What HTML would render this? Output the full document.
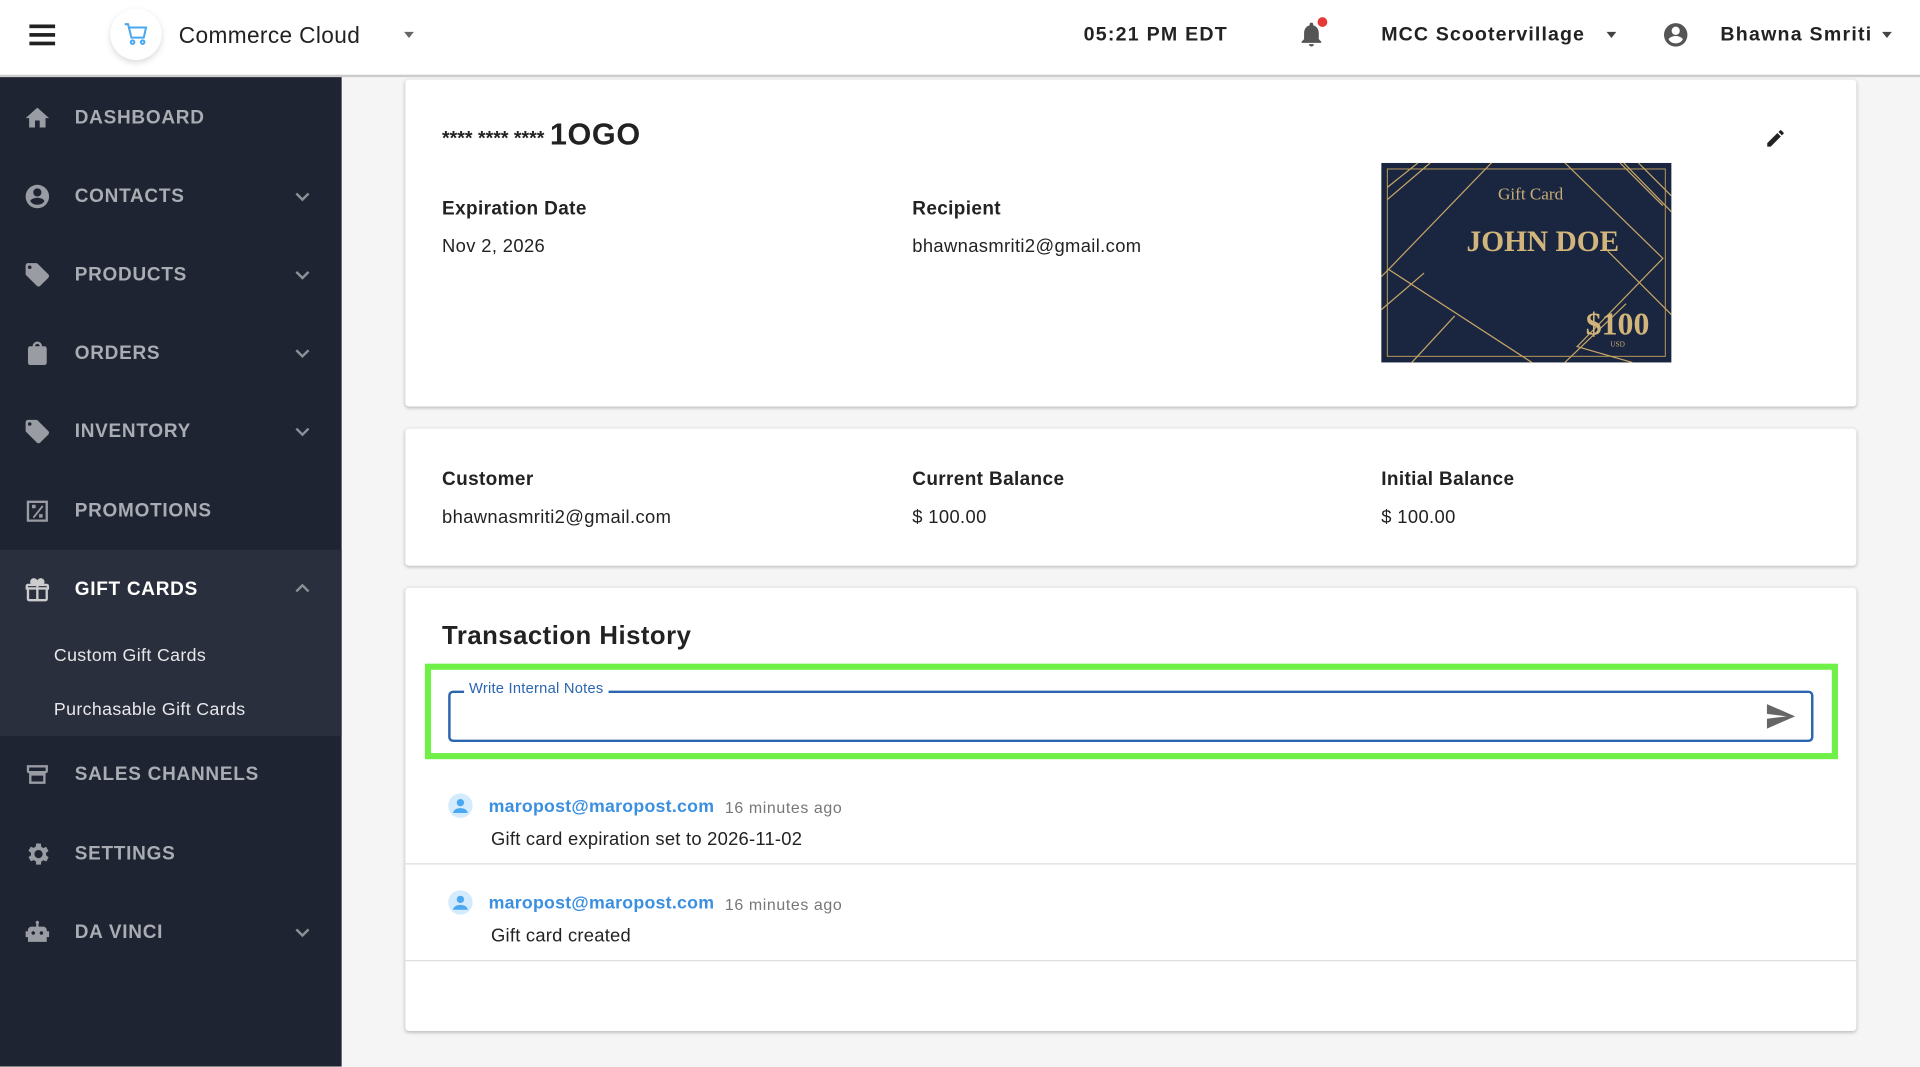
<!DOCTYPE html>
<html><head><meta charset="utf-8"><style>
*{box-sizing:border-box;margin:0;padding:0}
html,body{width:1920px;height:1067px;overflow:hidden;background:#f5f5f5}
#s{width:1568px;height:871px;transform:scale(1.22449);transform-origin:0 0;position:relative;font-family:"Liberation Sans",sans-serif;color:#222}
.hdr{position:absolute;left:0;top:0;width:1568px;height:63px;background:#fff;border-bottom:2px solid #ccc}
.side{position:absolute;left:0;top:63px;width:279px;height:808px;background:#1f2432}
.it{position:absolute;left:0;width:279px;height:50px;display:flex;align-items:center;color:#a9acb3;font-weight:bold;font-size:15.5px;letter-spacing:.6px}
.it svg{position:absolute;left:19px;width:23px;height:23px;fill:#9a9ca3}
.it span{position:absolute;left:61px;top:17px}
.it .ch{position:absolute;left:240px;width:14px;height:14px;fill:none;stroke:#8d9097;stroke-width:2}
.card{position:absolute;left:331px;width:1185px;background:#fff;box-shadow:0 1px 3px rgba(0,0,0,.25);border-radius:3px}
.lbl{position:absolute;font-size:15.5px;font-weight:bold;color:#222;letter-spacing:.3px}
.val{position:absolute;font-size:15px;color:#222;letter-spacing:.3px}
</style></head><body><div id="s">
<div class="hdr">
 <div style="position:absolute;left:24px;top:20px;width:21px;height:3px;background:#222;box-shadow:0 7px 0 #222,0 14px 0 #222"></div>
 <div style="position:absolute;left:90px;top:7px;width:42px;height:42px;border-radius:50%;background:#fff;box-shadow:0 2px 5px rgba(0,0,0,.15)"></div>
 <svg style="position:absolute;left:100px;top:17px" width="22" height="22" viewBox="0 0 24 24" fill="none" stroke="#4aa8f0" stroke-width="1.8"><path d="M2 3h3l3 12h11l2-9H6"/><circle cx="9" cy="19" r="1.6"/><circle cx="18" cy="19" r="1.6"/></svg>
 <div style="position:absolute;left:146px;top:18px;font-size:18.5px;color:#222;letter-spacing:.3px">Commerce Cloud</div>
 <div style="position:absolute;left:330px;top:26px;border:4px solid transparent;border-top:5px solid #666"></div>
 <div style="position:absolute;left:885px;top:20px;font-size:16px;font-weight:bold;letter-spacing:1px;color:#222">05:21 PM EDT</div>
 <svg style="position:absolute;left:1059px;top:16px" width="24" height="24" viewBox="0 0 24 24" fill="#555"><path d="M12 22a2 2 0 0 0 2-2h-4a2 2 0 0 0 2 2zm6-6V11c0-3-1.6-5.6-4.5-6.3V4a1.5 1.5 0 0 0-3 0v.7C7.6 5.4 6 8 6 11v5l-2 2v1h16v-1z"/></svg>
 <div style="position:absolute;left:1076px;top:14px;width:8px;height:8px;border-radius:50%;background:#e53935"></div>
 <div style="position:absolute;left:1128px;top:20px;font-size:16px;font-weight:bold;letter-spacing:.9px">MCC Scootervillage</div>
 <div style="position:absolute;left:1312px;top:26px;border:4px solid transparent;border-top:5px solid #444"></div>
 <svg style="position:absolute;left:1357px;top:17px" width="23" height="23" viewBox="0 0 24 24" fill="#555"><path d="M12 2a10 10 0 1 0 0 20 10 10 0 0 0 0-20zm0 3a3.5 3.5 0 1 1 0 7 3.5 3.5 0 0 1 0-7zm0 14.2a7.2 7.2 0 0 1-6-3.2c0-2 4-3.1 6-3.1s6 1.1 6 3.1a7.2 7.2 0 0 1-6 3.2z"/></svg>
 <div style="position:absolute;left:1405px;top:20px;font-size:16px;font-weight:bold;letter-spacing:1px">Bhawna Smriti</div>
 <div style="position:absolute;left:1537px;top:26px;border:4px solid transparent;border-top:5px solid #444"></div>
</div>
<div class="side">
 <div style="position:absolute;top:386px;left:0;width:279px;height:152px;background:#2a2f3d"></div>
 <div class="it" style="top:8px"><svg viewBox="0 0 24 24"><path d="M10 20v-6h4v6h5v-8h3L12 3 2 12h3v8z"/></svg><span>DASHBOARD</span></div>
 <div class="it" style="top:72px"><svg viewBox="0 0 24 24"><path d="M12 2a10 10 0 1 0 0 20 10 10 0 0 0 0-20zm0 3a3.5 3.5 0 1 1 0 7 3.5 3.5 0 0 1 0-7zm0 14a7 7 0 0 1-6-3c0-2 4-3 6-3s6 1 6 3a7 7 0 0 1-6 3z"/></svg><span>CONTACTS</span><svg class="ch" viewBox="0 0 14 14"><path d="M2 5l5 5 5-5"/></svg></div>
 <div class="it" style="top:136px"><svg viewBox="0 0 24 24"><path d="M21.4 11.6l-9-9A2 2 0 0 0 11 2H4a2 2 0 0 0-2 2v7c0 .6.2 1.1.6 1.4l9 9a2 2 0 0 0 2.8 0l7-7a2 2 0 0 0 0-2.8zM5.5 7A1.5 1.5 0 1 1 5.5 4a1.5 1.5 0 0 1 0 3z"/></svg><span>PRODUCTS</span><svg class="ch" viewBox="0 0 14 14"><path d="M2 5l5 5 5-5"/></svg></div>
 <div class="it" style="top:200px"><svg viewBox="0 0 24 24"><path d="M18 6h-2a4 4 0 0 0-8 0H6a2 2 0 0 0-2 2v12a2 2 0 0 0 2 2h12a2 2 0 0 0 2-2V8a2 2 0 0 0-2-2zm-6-2a2 2 0 0 1 2 2h-4a2 2 0 0 1 2-2z"/></svg><span>ORDERS</span><svg class="ch" viewBox="0 0 14 14"><path d="M2 5l5 5 5-5"/></svg></div>
 <div class="it" style="top:264px"><svg viewBox="0 0 24 24"><path d="M21.4 11.6l-9-9A2 2 0 0 0 11 2H4a2 2 0 0 0-2 2v7c0 .6.2 1.1.6 1.4l9 9a2 2 0 0 0 2.8 0l7-7a2 2 0 0 0 0-2.8zM5.5 7A1.5 1.5 0 1 1 5.5 4a1.5 1.5 0 0 1 0 3z"/></svg><span>INVENTORY</span><svg class="ch" viewBox="0 0 14 14"><path d="M2 5l5 5 5-5"/></svg></div>
 <div class="it" style="top:329px"><svg viewBox="0 0 24 24"><path d="M3 3h18v18H3zm2 2v14h14V5zm2.5 1.5h3v3h-3zm6 8h3v3h-3zM8 17l8-10 1.2 1L9.2 18z"/></svg><span>PROMOTIONS</span></div>
 <div class="it" style="top:393px;color:#fff"><svg viewBox="0 0 24 24" style="fill:#ccc"><path d="M20 7h-2.2A3 3 0 0 0 12 4a3 3 0 0 0-5.8 3H4a2 2 0 0 0-2 2v3h1v8a2 2 0 0 0 2 2h14a2 2 0 0 0 2-2v-8h1V9a2 2 0 0 0-2-2zM5 20v-8h6v8zm8 0v-8h6v8zM4 10V9h7v1zm9 0V9h7v1z"/></svg><span>GIFT CARDS</span><svg class="ch" viewBox="0 0 14 14"><path d="M2 9l5-5 5 5"/></svg></div>
 <div style="position:absolute;left:44px;top:465px;font-size:14.5px;color:#e8e8ea;letter-spacing:.3px">Custom Gift Cards</div>
 <div style="position:absolute;left:44px;top:509px;font-size:14.5px;color:#e8e8ea;letter-spacing:.3px">Purchasable Gift Cards</div>
 <div class="it" style="top:544px"><svg viewBox="0 0 24 24"><path d="M3 4h18v5a2 2 0 0 1-2 2v9H5v-9a2 2 0 0 1-2-2zm2 2v3h14V6zm2 7v5h10v-5z"/></svg><span>SALES CHANNELS</span></div>
 <div class="it" style="top:609px"><svg viewBox="0 0 24 24"><path d="M19.4 13a7.5 7.5 0 0 0 0-2l2.1-1.6-2-3.5-2.5 1a7 7 0 0 0-1.7-1L15 3h-4l-.4 2.7a7 7 0 0 0-1.7 1l-2.5-1-2 3.5L6.6 11a7.5 7.5 0 0 0 0 2l-2.1 1.6 2 3.5 2.5-1a7 7 0 0 0 1.7 1L11 21h4l.4-2.7a7 7 0 0 0 1.7-1l2.5 1 2-3.5zM13 15.5a3.5 3.5 0 1 1 0-7 3.5 3.5 0 0 1 0 7z"/></svg><span>SETTINGS</span></div>
 <div class="it" style="top:673px"><svg viewBox="0 0 24 24"><path d="M12 2a1.5 1.5 0 0 1 1 2.6V7h4a3 3 0 0 1 3 3v1h2v5h-2v4H4v-4H2v-5h2v-1a3 3 0 0 1 3-3h4V4.6A1.5 1.5 0 0 1 12 2zM8.5 11a1.5 1.5 0 1 0 0 3 1.5 1.5 0 0 0 0-3zm7 0a1.5 1.5 0 1 0 0 3 1.5 1.5 0 0 0 0-3z"/></svg><span>DA VINCI</span><svg class="ch" viewBox="0 0 14 14"><path d="M2 5l5 5 5-5"/></svg></div>
</div>

<div class="card" style="top:65px;height:267px">
 <div style="position:absolute;left:30px;top:31px;font-size:16px;font-weight:bold">**** **** **** <span style="font-size:25px;font-weight:bold;letter-spacing:.5px">1OGO</span></div>
 <svg style="position:absolute;left:1110px;top:39px" width="18" height="18" viewBox="0 0 24 24" fill="#222"><path d="M3 17.2V21h3.8L17.8 9.9l-3.7-3.7zM20.7 7a1 1 0 0 0 0-1.4l-2.3-2.3a1 1 0 0 0-1.4 0l-1.8 1.8 3.7 3.7z"/></svg>
 <div class="lbl" style="left:30px;top:97px">Expiration Date</div>
 <div class="val" style="left:30px;top:128px">Nov 2, 2026</div>
 <div class="lbl" style="left:414px;top:97px">Recipient</div>
 <div class="val" style="left:414px;top:128px">bhawnasmriti2@gmail.com</div>
 <svg style="position:absolute;left:797px;top:68px" width="237" height="163" viewBox="0 0 237 163">
  <rect width="237" height="163" fill="#1a2640"/>
  <rect x="5" y="5" width="227" height="153" fill="none" stroke="#b99a5a" stroke-width=".8"/>
  <g stroke="#c6a566" stroke-width="1" fill="none">
   <path d="M90 0L6 87 123 163M198 0L237 40"/><path d="M150 0L230 78 160 150 205 163M6 87L0 93"/><path d="M185 72L237 124M150 163L200 115M25 163L60 125M0 120L35 90"/>
   <path d="M195 0L230 35M210 0L237 27M5 20L30 0M5 30L40 0"/>
  </g>
  <text x="122" y="30" font-family="Liberation Serif,serif" font-size="14" fill="#c9ad74" text-anchor="middle">Gift Card</text>
  <text x="132" y="72" font-family="Liberation Serif,serif" font-size="24" font-weight="bold" fill="#d2b57a" text-anchor="middle">JOHN DOE</text>
  <text x="193" y="140" font-family="Liberation Serif,serif" font-size="26" font-weight="bold" fill="#d2b57a" text-anchor="middle">$100</text>
  <text x="193" y="150" font-family="Liberation Serif,serif" font-size="6" fill="#c9ad74" text-anchor="middle">USD</text>
 </svg>
</div>

<div class="card" style="top:350px;height:112px">
 <div class="lbl" style="left:30px;top:33px">Customer</div>
 <div class="val" style="left:30px;top:64px">bhawnasmriti2@gmail.com</div>
 <div class="lbl" style="left:414px;top:33px">Current Balance</div>
 <div class="val" style="left:414px;top:64px">$ 100.00</div>
 <div class="lbl" style="left:797px;top:33px">Initial Balance</div>
 <div class="val" style="left:797px;top:64px">$ 100.00</div>
</div>

<div class="card" style="top:480px;height:362px">
 <div style="position:absolute;left:30px;top:28px;font-size:21px;font-weight:bold;color:#222;letter-spacing:.4px">Transaction History</div>
 <div style="position:absolute;left:16px;top:62px;width:1154px;height:78px;border:5px solid #6ef046"></div>
 <div style="position:absolute;left:35px;top:84px;width:1115px;height:42px;border:2px solid #2b65b0;border-radius:4px"></div>
 <div style="position:absolute;left:48px;top:75px;background:#fff;padding:0 4px;font-size:12px;color:#2b65b0;letter-spacing:.2px">Write Internal Notes</div>
 <svg style="position:absolute;left:1111px;top:94px" width="24" height="22" viewBox="0 0 24 22" fill="#666"><path d="M1 21L24 11 1 1v8l16 2-16 2z"/></svg>
 <svg style="position:absolute;left:35px;top:168px" width="20" height="20" viewBox="0 0 20 20"><circle cx="10" cy="10" r="10" fill="#d3ebfc"/><circle cx="10" cy="7.5" r="3" fill="#4aa8f0"/><path d="M4 16a6 4 0 0 1 12 0z" fill="#4aa8f0"/></svg>
 <div style="position:absolute;left:68px;top:171px;font-size:14.5px;font-weight:bold;color:#3b8fe0;letter-spacing:.2px">maropost@maropost.com</div>
 <div style="position:absolute;left:261px;top:172px;font-size:13px;color:#777;letter-spacing:.5px">16 minutes ago</div>
 <div style="position:absolute;left:70px;top:197px;font-size:15px;color:#222;letter-spacing:.2px">Gift card expiration set to 2026-11-02</div>
 <div style="position:absolute;left:0;top:225px;width:1185px;height:1px;background:#ddd"></div>
 <svg style="position:absolute;left:35px;top:247px" width="20" height="20" viewBox="0 0 20 20"><circle cx="10" cy="10" r="10" fill="#d3ebfc"/><circle cx="10" cy="7.5" r="3" fill="#4aa8f0"/><path d="M4 16a6 4 0 0 1 12 0z" fill="#4aa8f0"/></svg>
 <div style="position:absolute;left:68px;top:250px;font-size:14.5px;font-weight:bold;color:#3b8fe0;letter-spacing:.2px">maropost@maropost.com</div>
 <div style="position:absolute;left:261px;top:251px;font-size:13px;color:#777;letter-spacing:.5px">16 minutes ago</div>
 <div style="position:absolute;left:70px;top:276px;font-size:15px;color:#222;letter-spacing:.2px">Gift card created</div>
 <div style="position:absolute;left:0;top:304px;width:1185px;height:1px;background:#ddd"></div>
</div>
</div></body></html>
